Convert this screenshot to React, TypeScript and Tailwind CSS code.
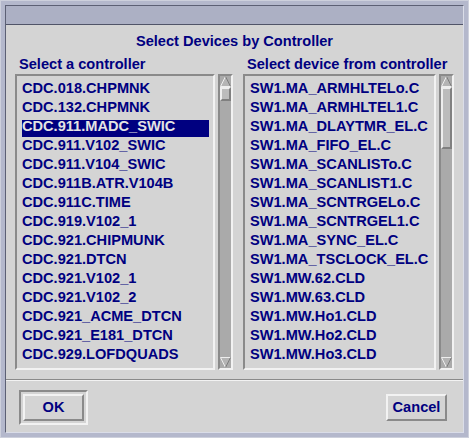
const controllers = [
  "CDC.018.CHPMNK",
  "CDC.132.CHPMNK",
  "CDC.911.MADC_SWIC",
  "CDC.911.V102_SWIC",
  "CDC.911.V104_SWIC",
  "CDC.911B.ATR.V104B",
  "CDC.911C.TIME",
  "CDC.919.V102_1",
  "CDC.921.CHIPMUNK",
  "CDC.921.DTCN",
  "CDC.921.V102_1",
  "CDC.921.V102_2",
  "CDC.921_ACME_DTCN",
  "CDC.921_E181_DTCN",
  "CDC.929.LOFDQUADS",
];

const devices = [
  "SW1.MA_ARMHLTELo.C",
  "SW1.MA_ARMHLTEL1.C",
  "SW1.MA_DLAYTMR_EL.C",
  "SW1.MA_FIFO_EL.C",
  "SW1.MA_SCANLISTo.C",
  "SW1.MA_SCANLIST1.C",
  "SW1.MA_SCNTRGELo.C",
  "SW1.MA_SCNTRGEL1.C",
  "SW1.MA_SYNC_EL.C",
  "SW1.MA_TSCLOCK_EL.C",
  "SW1.MW.62.CLD",
  "SW1.MW.63.CLD",
  "SW1.MW.Ho1.CLD",
  "SW1.MW.Ho2.CLD",
  "SW1.MW.Ho3.CLD",
];

function UpArrow() {
  return (
    <svg width="11" height="11" viewBox="0 0 11 11" className="block">
      <polygon points="5.5,0.5 10.5,10.5 0.5,10.5" fill="#b4b4b4" />
      <line x1="0.5" y1="10.5" x2="5.5" y2="0.5" stroke="#eeeeee" />
      <line x1="5.5" y1="0.5" x2="10.5" y2="10.5" stroke="#7c7c7c" />
      <line x1="0.5" y1="10.5" x2="10.5" y2="10.5" stroke="#eeeeee" />
    </svg>
  );
}

function DownArrow() {
  return (
    <svg width="11" height="11" viewBox="0 0 11 11" className="block">
      <polygon points="0.5,0.5 10.5,0.5 5.5,10.5" fill="#b4b4b4" />
      <line x1="0.5" y1="0.5" x2="10.5" y2="0.5" stroke="#eeeeee" />
      <line x1="0.5" y1="0.5" x2="5.5" y2="10.5" stroke="#eeeeee" />
      <line x1="10.5" y1="0.5" x2="5.5" y2="10.5" stroke="#7c7c7c" />
    </svg>
  );
}

function ScrollBar({ thumb }: { thumb: string }) {
  return (
    <div className="w-[15px] flex flex-col border-2 border-t-[#8a8a8a] border-l-[#8a8a8a] border-b-[#f2f2f2] border-r-[#f2f2f2] bg-[#aaaaaa]">
      <UpArrow />
      <div
        className={`${thumb} border-2 border-t-[#eeeeee] border-l-[#eeeeee] border-b-[#808080] border-r-[#808080] bg-[#bcbcbc]`}
      />
      <div className="flex-1" />
      <DownArrow />
    </div>
  );
}

function ListBox({
  items,
  selected,
  width,
  thumb,
}: {
  items: string[];
  selected?: number;
  width: string;
  thumb: string;
}) {
  return (
    <div className="flex gap-[3px] h-[296px]">
      <div
        className={`${width} border-2 border-t-[#8a8a8a] border-l-[#8a8a8a] border-b-[#f2f2f2] border-r-[#f2f2f2] pt-[6px] pl-[5px] pr-[4px] overflow-hidden`}
      >
        {items.map((item, i) => (
          <div key={item} className="h-[19px]">
            <div
              className={`h-[17px] leading-[13px] whitespace-nowrap ${
                i === selected ? "bg-[#000080] text-[#e4e4e4]" : "text-[#000080]"
              }`}
            >
              {item}
            </div>
          </div>
        ))}
      </div>
      <ScrollBar thumb={thumb} />
    </div>
  );
}

function Button({ label }: { label: string }) {
  return (
    <div className="w-[61px] h-[27px] flex items-center justify-center border-2 border-t-[#f2f2f2] border-l-[#f2f2f2] border-b-[#8a8a8a] border-r-[#8a8a8a] text-[#000080] leading-[17px]">
      {label}
    </div>
  );
}

export default function App() {
  return (
    <div className="w-[469px] h-[438px] bg-[#b4b8cc] border border-[#cdd0dc] p-[4px] font-['Liberation_Sans',Arial,sans-serif] text-[14.6px] font-bold">
      <div className="h-full flex flex-col border border-t-[#5c6074] border-l-[#5c6074] border-b-[#dadde8] border-r-[#dadde8]">
        <div className="h-[19px] bg-[#acb0c4] border-b border-[#505468]" />
        <div className="flex-1 bg-[#d4d4d4] flex flex-col">
          <div className="pt-[8px] h-[25px] leading-[17px] text-center text-[#000080]">
            Select Devices by Controller
          </div>
          <div className="mt-[6px] flex pl-[9px] gap-[10px]">
            <div className="w-[218px] flex flex-col">
              <div className="pl-[4px] h-[18px] leading-[17px] text-[#000080]">
                Select a controller
              </div>
              <ListBox items={controllers} selected={2} width="w-[200px]" thumb="h-[14px]" />
            </div>
            <div className="w-[211px] flex flex-col">
              <div className="pl-[4px] h-[18px] leading-[17px] text-[#000080] whitespace-nowrap">
                Select device from controller
              </div>
              <ListBox items={devices} width="w-[193px]" thumb="h-[62px]" />
            </div>
          </div>
          <div className="mt-[9px] border-t border-b border-t-[#8a8a8a] border-b-[#f2f2f2]" />
          <div className="mt-[9px] flex items-center justify-between pl-[13px] pr-[16px]">
            <div className="p-[2px] border-2 border-t-[#8a8a8a] border-l-[#8a8a8a] border-b-[#f2f2f2] border-r-[#f2f2f2]">
              <Button label="OK" />
            </div>
            <Button label="Cancel" />
          </div>
        </div>
      </div>
    </div>
  );
}
